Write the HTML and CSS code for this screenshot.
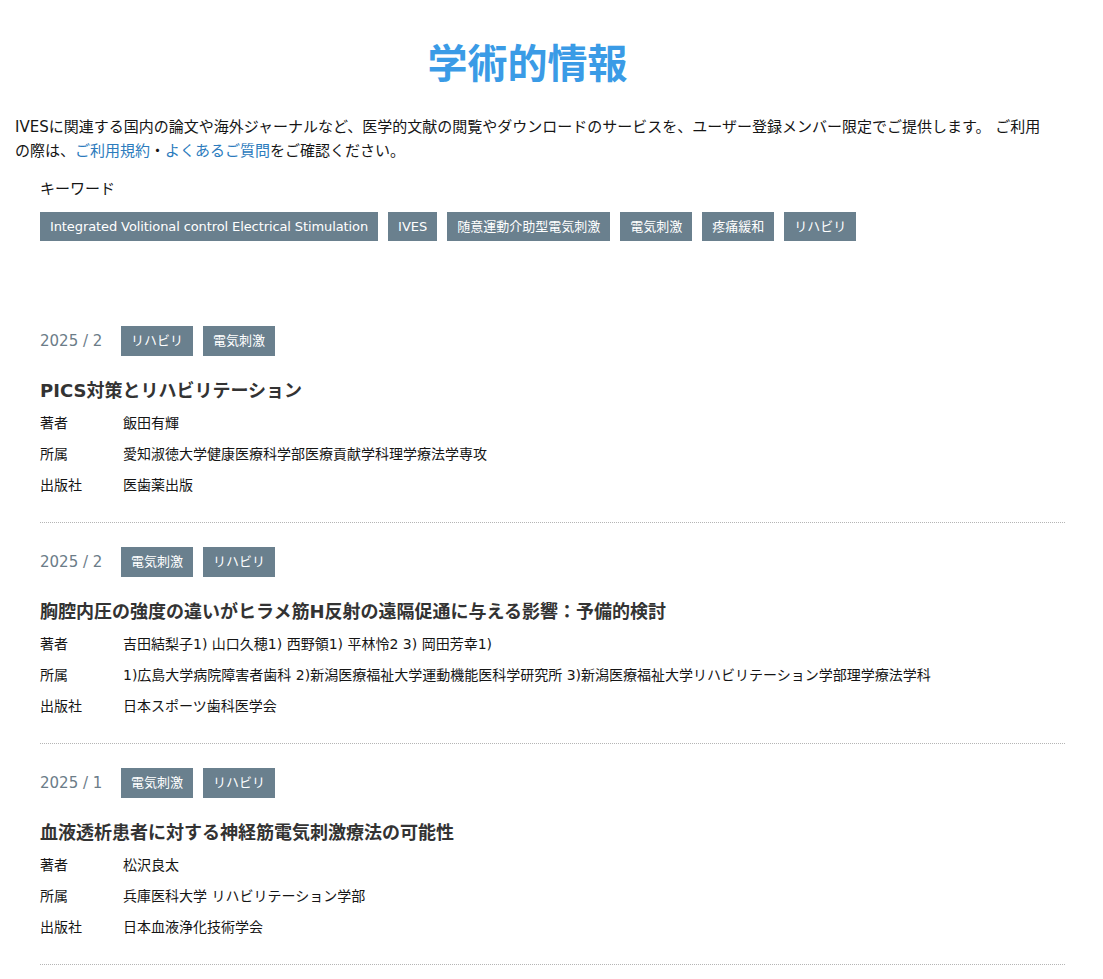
FILE: index.html
```html
<!DOCTYPE html>
<html lang="ja">
<head>
<meta charset="utf-8">
<title>学術的情報</title>
<link rel="stylesheet" href="styles.css">
</head>
<body>
<main class="page">
  <section class="intro">
    <h1 class="page-title">学術的情報</h1>
    <p class="lead">IVESに関連する国内の論文や海外ジャーナルなど、医学的文献の閲覧やダウンロードのサービスを、ユーザー登録メンバー限定でご提供します。 ご利用の際は、<a href="#" class="link">ご利用規約</a>・<a href="#" class="link">よくあるご質問</a>をご確認ください。</p>
  </section>
  <section class="keywords">
    <div class="kw-label">キーワード</div>
    <div class="tag-row">
      <span class="tag">Integrated Volitional control Electrical Stimulation</span>
      <span class="tag">IVES</span>
      <span class="tag">随意運動介助型電気刺激</span>
      <span class="tag">電気刺激</span>
      <span class="tag">疼痛緩和</span>
      <span class="tag">リハビリ</span>
    </div>
  </section>
  <section class="entries">
    <article class="entry">
      <div class="entry-head">
        <span class="date">2025 / 2</span>
        <span class="tag tag-entry">リハビリ</span>
        <span class="tag tag-entry">電気刺激</span>
      </div>
      <h2 class="entry-title">PICS対策とリハビリテーション</h2>
      <dl class="meta">
        <dt>著者</dt><dd>飯田有輝</dd>
        <dt>所属</dt><dd>愛知淑徳大学健康医療科学部医療貢献学科理学療法学専攻</dd>
        <dt>出版社</dt><dd>医歯薬出版</dd>
      </dl>
    </article>
    <article class="entry">
      <div class="entry-head">
        <span class="date">2025 / 2</span>
        <span class="tag tag-entry">電気刺激</span>
        <span class="tag tag-entry">リハビリ</span>
      </div>
      <h2 class="entry-title">胸腔内圧の強度の違いがヒラメ筋H反射の遠隔促通に与える影響：予備的検討</h2>
      <dl class="meta">
        <dt>著者</dt><dd>吉田結梨子1) 山口久穂1) 西野領1) 平林怜2 3) 岡田芳幸1)</dd>
        <dt>所属</dt><dd>1)広島大学病院障害者歯科 2)新潟医療福祉大学運動機能医科学研究所 3)新潟医療福祉大学リハビリテーション学部理学療法学科</dd>
        <dt>出版社</dt><dd>日本スポーツ歯科医学会</dd>
      </dl>
    </article>
    <article class="entry">
      <div class="entry-head">
        <span class="date">2025 / 1</span>
        <span class="tag tag-entry">電気刺激</span>
        <span class="tag tag-entry">リハビリ</span>
      </div>
      <h2 class="entry-title">血液透析患者に対する神経筋電気刺激療法の可能性</h2>
      <dl class="meta">
        <dt>著者</dt><dd>松沢良太</dd>
        <dt>所属</dt><dd>兵庫医科大学 リハビリテーション学部</dd>
        <dt>出版社</dt><dd>日本血液浄化技術学会</dd>
      </dl>
    </article>
  </section>
</main>
</body>
</html>
```

FILE: styles.css
```css
html, body {
  margin: 0;
  padding: 0;
  background: #ffffff;
}
body {
  font-family: "DejaVu Sans", "Noto Sans CJK JP", sans-serif;
  color: #151515;
}
.page {
  padding: 0 0 40px 15px;
}
.intro {
  width: 1035px;
}
.page-title {
  margin: 31px 0 0;
  padding-right: 10px;
  font-size: 40px;
  line-height: 60px;
  font-weight: 700;
  color: #3a9be6;
  text-align: center;
  font-family: "Noto Sans CJK JP", sans-serif;
}
.lead {
  margin: 24px 0 0;
  font-size: 15px;
  line-height: 24px;
}
.link {
  color: #2b7bbd;
  text-decoration: none;
}
.keywords {
  margin: 14px 0 0 25px;
}
.kw-label {
  font-size: 15px;
  line-height: 24px;
}
.tag-row {
  display: flex;
  flex-wrap: wrap;
  gap: 10px;
  margin-top: 11px;
}
.tag {
  display: inline-block;
  background: #6a808e;
  color: #ffffff;
  font-size: 13px;
  line-height: 19px;
  padding: 5px 10px;
}
.tag-row .tag:first-child {
  letter-spacing: -0.1px;
}
.entries {
  margin: 85px 0 0 25px;
  width: 1025px;
}
.entry {
  padding: 24px 0 21px;
  border-bottom: 1px dotted #b5b5b5;
}
.entry:first-child {
  padding-top: 0;
}
.entry-head {
  display: flex;
  align-items: center;
  gap: 10px;
}
.date {
  width: 71px;
  font-size: 15px;
  line-height: 30px;
  color: #6b7c88;
}
.tag-entry {
  line-height: 20px;
}
.entry-title {
  margin: 21px 0 0;
  font-size: 18px;
  line-height: 27px;
  font-weight: 700;
  color: #333333;
}
.meta {
  margin: 4px 0 0;
  display: grid;
  grid-template-columns: 83px 1fr;
  font-size: 14px;
  line-height: 31px;
}
.meta dt, .meta dd {
  margin: 0;
}
```
